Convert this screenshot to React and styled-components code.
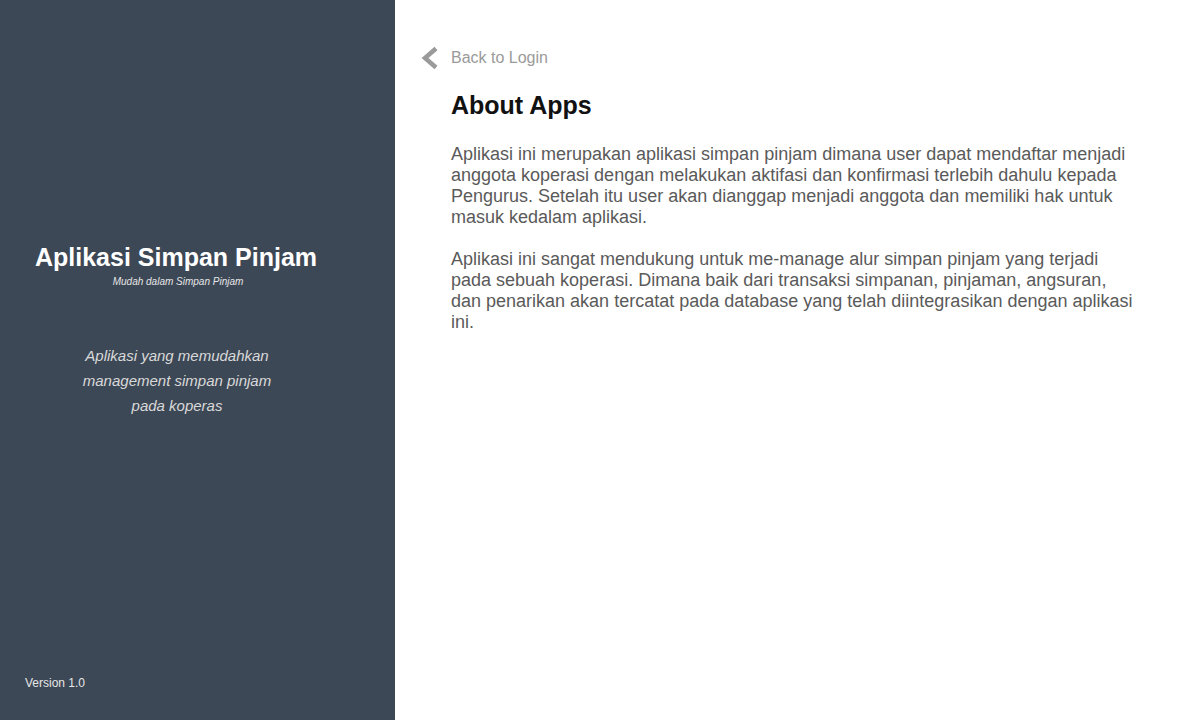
import React from 'react'
import styled, { createGlobalStyle } from 'styled-components'

const GlobalStyles = createGlobalStyle`
  html, body {
    margin: 0;
    padding: 0;
    height: 100%;
  }
  body {
    font-family: "Liberation Sans", Arial, sans-serif;
    background: #fff;
  }
  #root {
    height: 100%;
  }
`

const Layout = styled.div`
  display: flex;
  height: 720px;
`

const Sidebar = styled.aside`
  width: 395px;
  flex-shrink: 0;
  background: #3d4856;
  color: #fff;
  display: flex;
  flex-direction: column;
  box-sizing: border-box;
  padding: 0 0 30px 0;

  .brand {
    margin-top: 242px;
    width: 352px;
    text-align: center;
  }

  .title {
    margin: 0;
    font-size: 25px;
    font-weight: bold;
    line-height: 30px;
  }

  .subtitle {
    margin: 3px 0 0;
    padding-left: 4px;
    font-size: 10px;
    font-style: italic;
    line-height: 14px;
    color: #e6e6e6;
  }

  .tagline {
    margin: 54px 0 0;
    width: 354px;
    text-align: center;
    font-size: 15px;
    font-style: italic;
    line-height: 25px;
    color: #d9d9d9;
  }

  .version {
    margin-top: auto;
    padding-left: 25px;
    font-size: 12px;
    color: #e6e6e6;
  }
`

const Content = styled.main`
  flex: 1;
  padding: 46px 60px 0 56px;

  .back {
    display: flex;
    align-items: center;
    gap: 12px;
    margin-left: -31px;
    color: #9a9a9a;
    font-size: 16px;
    text-decoration: none;
    height: 24px;
  }

  h1 {
    margin: 20px 0 24px;
    font-size: 25px;
    line-height: 30px;
    font-weight: bold;
    color: #111;
  }

  p {
    margin: 0 0 21px;
    font-size: 18px;
    line-height: 21px;
    color: #5a5a5a;
  }
`

const Chevron = () => (
  <svg width="19" height="24" viewBox="0 0 19 24">
    <polyline points="16,2.5 5,12 16,21.5" fill="none" stroke="#9a9a9a" strokeWidth="4.5" />
  </svg>
)

const App = () => {
  return (
    <Layout>
      <GlobalStyles />
      <Sidebar>
        <div className="brand">
          <h2 className="title">Aplikasi Simpan Pinjam</h2>
          <p className="subtitle">Mudah dalam Simpan Pinjam</p>
        </div>
        <p className="tagline">
          Aplikasi yang memudahkan<br />
          management simpan pinjam<br />
          pada koperas
        </p>
        <div className="version">Version 1.0</div>
      </Sidebar>

      <Content>
        <a className="back" href="#login">
          <Chevron />
          Back to Login
        </a>
        <h1>About Apps</h1>
        <p>
          Aplikasi ini merupakan aplikasi simpan pinjam dimana user dapat mendaftar menjadi anggota koperasi dengan melakukan aktifasi dan konfirmasi terlebih dahulu kepada Pengurus. Setelah itu user akan dianggap menjadi anggota dan memiliki hak untuk masuk kedalam aplikasi.
        </p>
        <p>
          Aplikasi ini sangat mendukung untuk me-manage alur simpan pinjam yang terjadi pada sebuah koperasi. Dimana baik dari transaksi simpanan, pinjaman, angsuran, dan penarikan akan tercatat pada database yang telah diintegrasikan dengan aplikasi ini.
        </p>
      </Content>
    </Layout>
  )
}

export default App
